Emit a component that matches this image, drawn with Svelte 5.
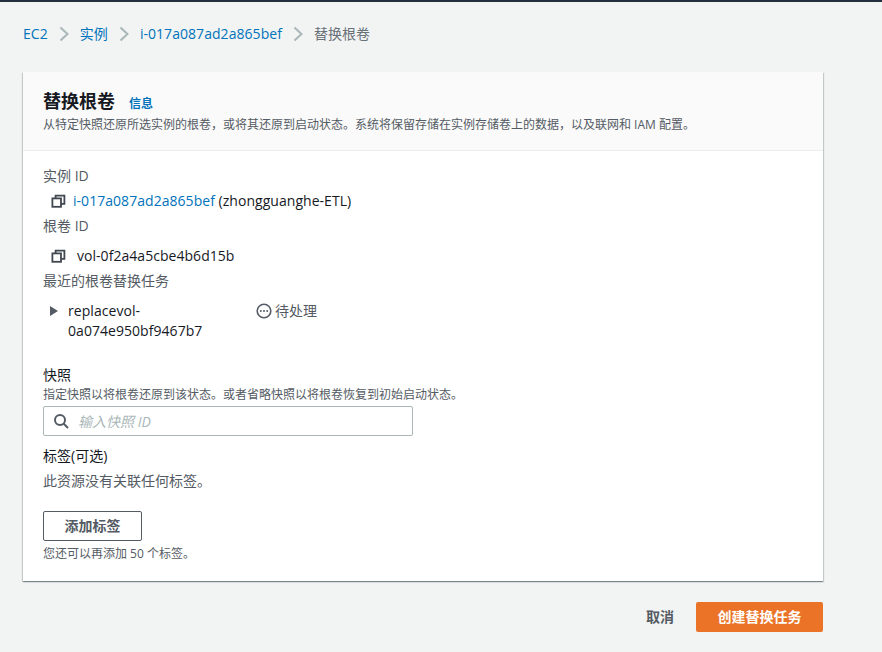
<script>
  const crumbs = [
    { label: 'EC2' },
    { label: '实例' },
    { label: 'i-017a087ad2a865bef' }
  ];
</script>

{#snippet copyIcon()}
  <svg class="copy" viewBox="0 0 16 16" width="16" height="16" fill="none" stroke="#414750" stroke-width="1.8">
    <rect x="2.4" y="5.4" width="8.6" height="8.4" />
    <path d="M5.6 5.4V2.6h8.8v8.2h-3.4" />
  </svg>
{/snippet}

<div class="page">
  <nav class="crumbs">
    {#each crumbs as c}
      <a href="#top">{c.label}</a>
      <svg class="sep" viewBox="0 0 10 16" width="10" height="16" fill="none" stroke="#aab7b8" stroke-width="2">
        <path d="M1.5 1.5 8.5 8l-7 6.5" />
      </svg>
    {/each}
    <span class="current">替换根卷</span>
  </nav>

  <section class="card">
    <header class="card-head">
      <div class="title-row">
        <h1>替换根卷</h1>
        <a class="info" href="#top">信息</a>
      </div>
      <p>从特定快照还原所选实例的根卷，或将其还原到启动状态。系统将保留存储在实例存储卷上的数据，以及联网和 IAM 配置。</p>
    </header>

    <div class="card-body">
      <div class="label first">实例 ID</div>
      <div class="value v1">
        {@render copyIcon()}
        <span><a href="#top">i-017a087ad2a865bef</a> (zhongguanghe-ETL)</span>
      </div>

      <div class="label second">根卷 ID</div>
      <div class="value v2">
        {@render copyIcon()}
        <span class="vol">vol-0f2a4a5cbe4b6d15b</span>
      </div>

      <div class="label third">最近的根卷替换任务</div>
      <div class="task">
        <svg class="caret" viewBox="0 0 10 12" width="10" height="12"><path d="M1 1l8 5-8 5z" fill="#545b64" /></svg>
        <div class="task-name">replacevol-<br />0a074e950bf9467b7</div>
        <div class="status">
          <svg viewBox="0 0 16 16" width="16" height="16" fill="none">
            <circle cx="8" cy="8" r="6.8" stroke="#545b64" stroke-width="1.6" />
            <circle cx="4.8" cy="8" r="1" fill="#545b64" />
            <circle cx="8" cy="8" r="1" fill="#545b64" />
            <circle cx="11.2" cy="8" r="1" fill="#545b64" />
          </svg>
          <span>待处理</span>
        </div>
      </div>

      <div class="field-label">快照</div>
      <div class="hint snap">指定快照以将根卷还原到该状态。或者省略快照以将根卷恢复到初始启动状态。</div>
      <div class="search">
        <svg viewBox="0 0 16 16" width="16" height="16" fill="none" stroke="#545b64" stroke-width="2">
          <circle cx="7" cy="7" r="5" />
          <path d="M10.5 10.5 15 15" />
        </svg>
        <input type="text" placeholder="输入快照 ID" />
      </div>

      <div class="tags-label">标签(可选)</div>
      <div class="tags-empty">此资源没有关联任何标签。</div>
      <button class="add">添加标签</button>
      <div class="hint remain">您还可以再添加 50 个标签。</div>
    </div>
  </section>

  <footer class="actions">
    <button class="cancel">取消</button>
    <button class="primary">创建替换任务</button>
  </footer>
</div>

<style>
  :global(body) {
    background: #f2f3f3;
    font-family: "Open Sans", "Noto Sans CJK SC", sans-serif;
    color: #16191f;
  }

  .page {
    height: 652px;
    box-sizing: border-box;
    border-top: 2px solid #232f3e;
    padding: 0 59px 0 23px;
    font-size: 14px;
    line-height: 22px;
    overflow: hidden;
  }

  a {
    color: #0073bb;
    text-decoration: none;
  }

  .crumbs {
    display: flex;
    align-items: center;
    height: 22px;
    margin-top: 21px;
  }

  .crumbs a {
    letter-spacing: 0.05px;
  }

  .sep {
    margin: 0 11px 0 11px;
  }

  .current {
    color: #687078;
  }

  .card {
    margin-top: 27px;
    height: 509px;
    background: #fff;
    box-shadow: 0 1px 1px 0 rgba(0, 28, 36, 0.3), 1px 1px 1px 0 rgba(0, 28, 36, 0.15), -1px 1px 1px 0 rgba(0, 28, 36, 0.15);
  }

  .card-head {
    height: 79px;
    box-sizing: border-box;
    padding: 17px 20px 0;
    background: #fafafa;
    border-bottom: 1px solid #eaeded;
  }

  .title-row {
    display: flex;
    align-items: baseline;
    height: 24px;
  }

  h1 {
    margin: 0;
    font-size: 18px;
    line-height: 24px;
    font-weight: 700;
  }

  .info {
    margin-left: 14px;
    font-size: 12px;
    font-weight: 700;
  }

  .card-head p {
    margin: 4px 0 0;
    font-size: 12px;
    line-height: 16px;
    color: #545b64;
  }

  .card-body {
    padding: 14px 20px 0;
  }

  .label {
    color: #545b64;
  }

  .value {
    display: flex;
    align-items: center;
    padding-left: 7px;
    letter-spacing: 0.04px;
  }

  .copy {
    margin-right: 7px;
  }

  .v1 {
    margin-top: 3px;
  }

  .second {
    margin-top: 3px;
  }

  .v2 {
    margin-top: 8px;
  }

  .vol {
    margin-left: 4px;
  }

  .third {
    margin-top: 3px;
  }

  .task {
    display: flex;
    margin-top: 8px;
    padding-left: 6px;
  }

  .caret {
    margin-top: 5px;
    margin-right: 9px;
  }

  .task-name {
    width: 188px;
    padding-top: 1px;
    line-height: 20px;
    letter-spacing: 0.05px;
  }

  .status {
    display: flex;
    align-items: center;
    gap: 3px;
    height: 22px;
    color: #545b64;
  }

  .field-label {
    margin-top: 23px;
  }

  .hint {
    font-size: 12px;
    line-height: 16px;
    color: #545b64;
  }

  .snap {
    margin-top: 1px;
  }

  .search {
    display: flex;
    align-items: center;
    box-sizing: border-box;
    width: 370px;
    height: 30px;
    margin-top: 3px;
    padding-left: 9px;
    border: 1px solid #aab7b8;
    border-radius: 2px;
    background: #fff;
  }

  .search input {
    flex: 1;
    margin-left: 9px;
    border: 0;
    outline: 0;
    padding: 1px 0 0;
    font: italic 14px/22px "Open Sans", "Noto Sans CJK SC", sans-serif;
    background: transparent;
  }

  .search input::placeholder {
    color: #aab7b8;
    opacity: 1;
  }

  .tags-label {
    margin-top: 9px;
  }

  .tags-empty {
    margin-top: 3px;
    color: #545b64;
  }

  .add {
    display: block;
    width: 99px;
    height: 30px;
    margin-top: 19px;
    padding: 0;
    border: 1px solid #545b64;
    border-radius: 2px;
    background: #fff;
    color: #545b64;
    font: 700 14px/22px "Open Sans", "Noto Sans CJK SC", sans-serif;
  }

  .remain {
    margin-top: 5px;
  }

  .actions {
    display: flex;
    justify-content: flex-end;
    align-items: center;
    margin-top: 21px;
  }

  .actions button {
    height: 30px;
    padding: 0;
    border: 0;
    border-radius: 2px;
    font: 700 14px/22px "Open Sans", "Noto Sans CJK SC", sans-serif;
  }

  .cancel {
    background: transparent;
    color: #545b64;
    margin-right: 22px;
  }

  .primary {
    width: 127px;
    background: #eb7327;
    color: #fff;
  }
</style>
